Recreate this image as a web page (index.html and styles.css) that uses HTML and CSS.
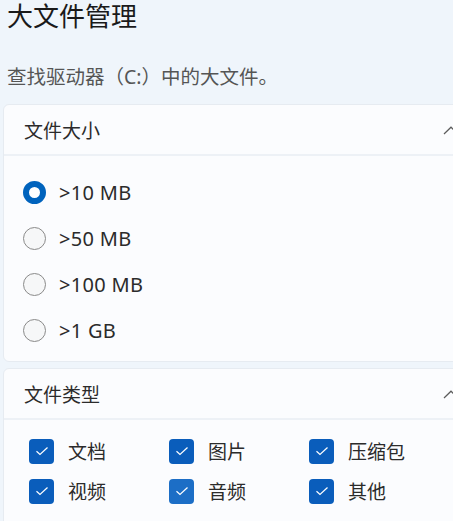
FILE: index.html
```html
<!DOCTYPE html>
<html lang="zh-CN">
<head>
<meta charset="utf-8">
<title>大文件管理</title>
<link rel="stylesheet" href="styles.css">
</head>
<body>
<div class="page">
  <h1 class="title">大文件管理</h1>
  <p class="subtitle">查找驱动器（C:）中的大文件。</p>

  <section class="card">
    <div class="card-head">
      <span class="card-title">文件大小</span>
      <svg class="chevron" width="16" height="9" viewBox="0 0 16 9"><path d="M1 8 L8 1.2 L15 8" fill="none" stroke="#5c5c5c" stroke-width="1.2"/></svg>
    </div>
    <div class="radios">
      <label class="radio-row"><span class="radio checked"></span><span class="opt">&gt;10 MB</span></label>
      <label class="radio-row"><span class="radio"></span><span class="opt">&gt;50 MB</span></label>
      <label class="radio-row"><span class="radio"></span><span class="opt">&gt;100 MB</span></label>
      <label class="radio-row"><span class="radio"></span><span class="opt">&gt;1 GB</span></label>
    </div>
  </section>

  <section class="card card-last">
    <div class="card-head">
      <span class="card-title">文件类型</span>
      <svg class="chevron" width="16" height="9" viewBox="0 0 16 9"><path d="M1 8 L8 1.2 L15 8" fill="none" stroke="#5c5c5c" stroke-width="1.2"/></svg>
    </div>
    <div class="checks">
      <label class="check-row"><span class="box"><svg width="14" height="10" viewBox="0 0 14 10"><path d="M1.5 5.2 L5 8.5 L12.5 1.5" fill="none" stroke="#fff" stroke-width="1.2"/></svg></span><span class="opt">文档</span></label>
      <label class="check-row"><span class="box"><svg width="14" height="10" viewBox="0 0 14 10"><path d="M1.5 5.2 L5 8.5 L12.5 1.5" fill="none" stroke="#fff" stroke-width="1.2"/></svg></span><span class="opt">图片</span></label>
      <label class="check-row"><span class="box"><svg width="14" height="10" viewBox="0 0 14 10"><path d="M1.5 5.2 L5 8.5 L12.5 1.5" fill="none" stroke="#fff" stroke-width="1.2"/></svg></span><span class="opt">压缩包</span></label>
      <label class="check-row"><span class="box"><svg width="14" height="10" viewBox="0 0 14 10"><path d="M1.5 5.2 L5 8.5 L12.5 1.5" fill="none" stroke="#fff" stroke-width="1.2"/></svg></span><span class="opt">视频</span></label>
      <label class="check-row"><span class="box hover"><svg width="14" height="10" viewBox="0 0 14 10"><path d="M1.5 5.2 L5 8.5 L12.5 1.5" fill="none" stroke="#fff" stroke-width="1.2"/></svg></span><span class="opt">音频</span></label>
      <label class="check-row"><span class="box"><svg width="14" height="10" viewBox="0 0 14 10"><path d="M1.5 5.2 L5 8.5 L12.5 1.5" fill="none" stroke="#fff" stroke-width="1.2"/></svg></span><span class="opt">其他</span></label>
    </div>
  </section>
</div>
</body>
</html>
```

FILE: styles.css
```css
html, body {
  margin: 0;
  padding: 0;
  height: 100%;
  overflow: hidden;
}
body {
  background: #eff5fb;
  font-family: "Noto Sans", "Noto Sans CJK SC", sans-serif;
  color: #1f1f1f;
}
.page {
  width: 480px;
}
.title {
  margin: 0 0 0 7px;
  font-size: 26px;
  font-weight: 400;
  line-height: 32px;
  color: #1a1a1a;
}
.subtitle {
  margin: 30px 0 0 7px;
  font-size: 19.5px;
  line-height: 30px;
  color: #555;
}
.card {
  margin: 12px 0 0 3px;
  width: 468px;
  background: #fbfcfe;
  border: 1px solid #e6ebf1;
  border-radius: 6px;
}
.card + .card {
  margin-top: 6px;
}
.card-head {
  height: 49px;
  display: flex;
  align-items: center;
  justify-content: space-between;
  padding: 0 13px 0 20px;
  border-bottom: 2px solid #edf1f6;
}
.card-title {
  font-size: 19px;
  color: #2b2b2b;
}
.chevron {
  display: block;
  margin-top: 2px;
}
.radios {
  padding: 13px 0 8px 19px;
}
.radio-row {
  height: 46px;
  display: flex;
  align-items: center;
}
.radio {
  box-sizing: border-box;
  width: 23px;
  height: 23px;
  border-radius: 50%;
  border: 1px solid #8a8a8a;
  background: #f6f7f8;
  margin-right: 13px;
}
.radio.checked {
  border: 6px solid #0063bd;
  background: #fff;
}
.opt {
  font-size: 19px;
  color: #2b2b2b;
}
.radio-row .opt {
  font-size: 20px;
  letter-spacing: 0.3px;
}
.checks {
  display: grid;
  grid-template-columns: 140px 140px 140px;
  padding: 11px 0 30px 25px;
}
.check-row {
  height: 40px;
  display: flex;
  align-items: center;
}
.box {
  box-sizing: border-box;
  width: 25px;
  height: 25px;
  border-radius: 4px;
  background: #0a5dbb;
  display: flex;
  align-items: center;
  justify-content: center;
  margin-right: 14px;
}
.box.hover {
  background: #1c6ec6;
}
```
